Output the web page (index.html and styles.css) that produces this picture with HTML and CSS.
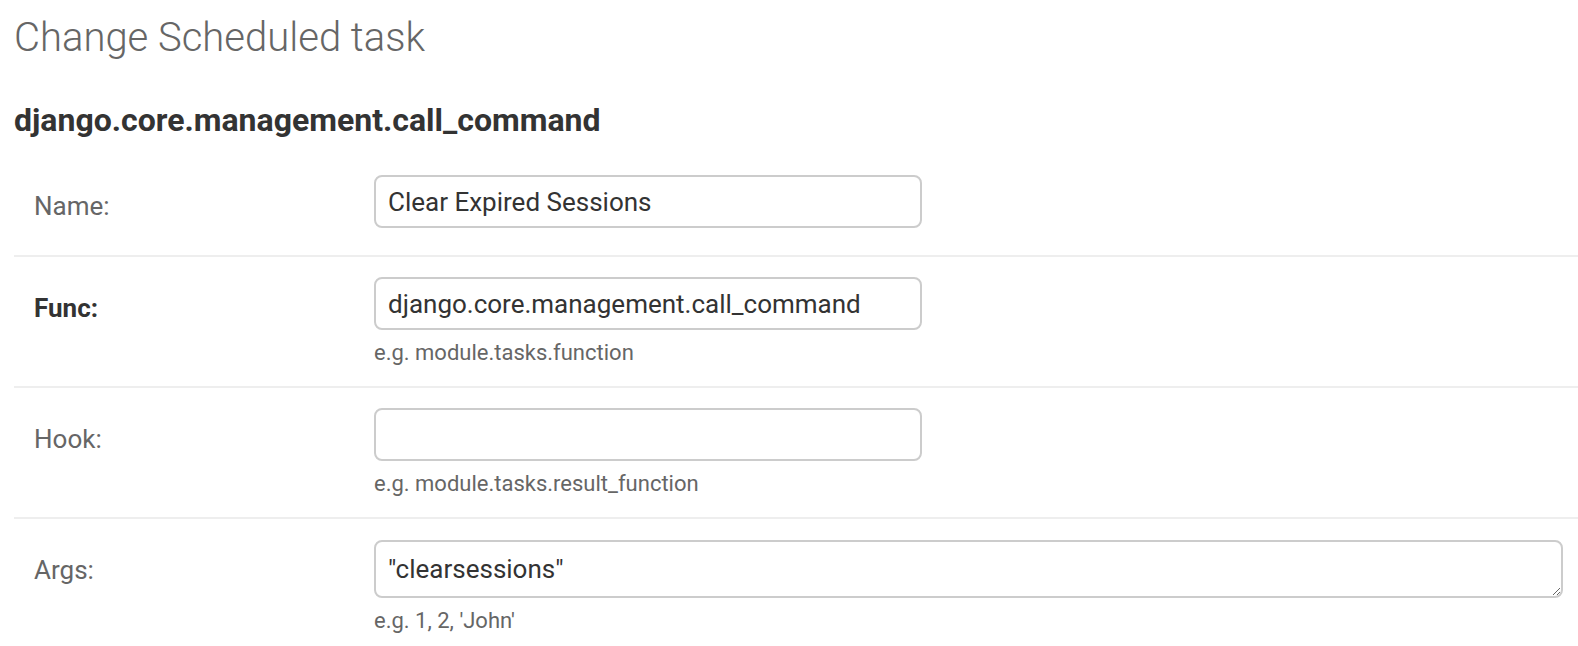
FILE: index.html
```html
<!DOCTYPE html>
<html lang="en">
<head>
<meta charset="utf-8">
<title>Change Scheduled task</title>
<link rel="stylesheet" href="styles.css">
</head>
<body>
<main class="page">
  <h1 class="title">Change Scheduled task</h1>
  <h2 class="subtitle">django.core.management.call_command</h2>
  <form class="form">
    <div class="form-row no-help">
      <div class="field">
        <label class="label" for="id_name">Name:</label>
        <input class="text-input" id="id_name" type="text" value="Clear Expired Sessions">
      </div>
    </div>
    <div class="form-row">
      <div class="field">
        <label class="label required" for="id_func">Func:</label>
        <input class="text-input" id="id_func" type="text" value="django.core.management.call_command">
      </div>
      <div class="help">e.g. module.tasks.function</div>
    </div>
    <div class="form-row">
      <div class="field">
        <label class="label" for="id_hook">Hook:</label>
        <input class="text-input" id="id_hook" type="text" value="">
      </div>
      <div class="help">e.g. module.tasks.result_function</div>
    </div>
    <div class="form-row">
      <div class="field">
        <label class="label" for="id_args">Args:</label>
        <textarea class="text-area" id="id_args" rows="1">"clearsessions"</textarea>
      </div>
      <div class="help">e.g. 1, 2, 'John'</div>
    </div>
  </form>
</main>
</body>
</html>
```
FILE: styles.css
```css
* {
  box-sizing: border-box;
}

html, body {
  margin: 0;
  padding: 0;
  background: #ffffff;
}

body {
  font-family: Roboto, "Liberation Sans", Arial, sans-serif;
  color: #333333;
}

.page {
  padding: 14px 0 0 14px;
}

.title {
  margin: 0;
  font-size: 40px;
  line-height: 48px;
  font-weight: 300;
  color: #666666;
}

.subtitle {
  margin: 38px 0 0 0;
  font-size: 32px;
  line-height: 40px;
  font-weight: 700;
  color: #333333;
}

.form {
  margin-top: 15px;
}

.form-row {
  padding: 20px 15px 20px 20px;
  border-bottom: 2px solid #eeeeee;
  font-size: 26px;
}

.form-row.no-help {
  padding-bottom: 27px;
}

.field {
  display: flex;
  align-items: flex-start;
}

.label {
  flex: 0 0 340px;
  width: 340px;
  padding: 18px 20px 0 0;
  font-size: 26px;
  line-height: 1;
  color: #666666;
}

.label.required {
  font-weight: 700;
  color: #333333;
}

.text-input,
.text-area {
  margin: 0;
  border: 2px solid #cccccc;
  border-radius: 8px;
  padding: 10px 12px;
  font-family: Roboto, "Liberation Sans", Arial, sans-serif;
  font-size: 26px;
  color: #333333;
  background: #ffffff;
}

.text-input {
  width: 548px;
  height: 53px;
}

.text-area {
  flex: 1 1 auto;
  height: 58px;
  margin-top: 1px;
  padding: 12px 12px 8px;
  line-height: normal;
}

.help {
  margin-left: 340px;
  padding-top: 10px;
  font-size: 22px;
  line-height: 26px;
  color: #666666;
}
```
